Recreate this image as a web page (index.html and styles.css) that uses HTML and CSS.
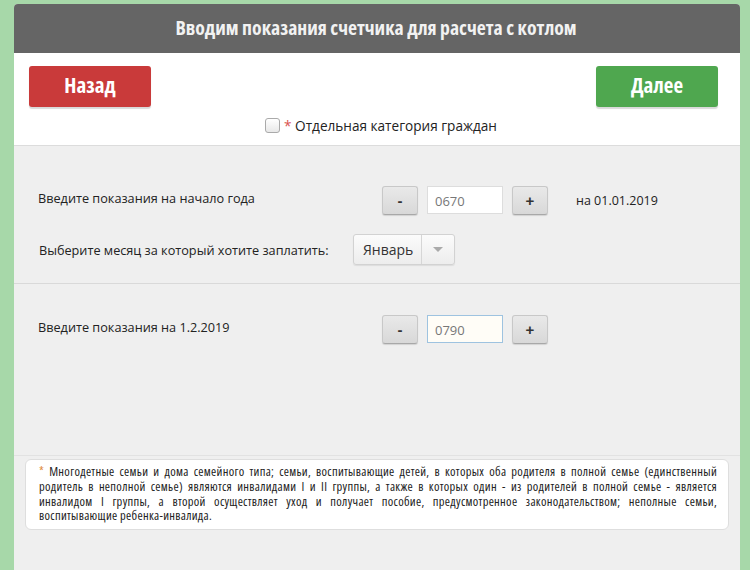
FILE: index.html
```html
<!DOCTYPE html>
<html lang="ru">
<head>
<meta charset="utf-8">
<link rel="stylesheet" href="styles.css">
</head>
<body>
<div class="panel">
  <div class="header">Вводим показания счетчика для расчета с котлом</div>
  <div class="top">
    <div class="nav">
      <button class="btn btn-back">Назад</button>
      <button class="btn btn-next">Далее</button>
    </div>
    <label class="category"><span class="check"></span><span class="cat-text"><span class="star">*</span> Отдельная категория граждан</span></label>
  </div>
  <div class="body">
    <div class="section">
      <div class="row">
        <div class="label label-a">Введите показания на начало года</div>
        <div class="stepper">
          <button class="step">-</button>
          <div class="value">0670</div>
          <button class="step">+</button>
        </div>
        <div class="date">на 01.01.2019</div>
      </div>
      <div class="row row-month">
        <div class="label label-b">Выберите месяц за который хотите заплатить:</div>
        <div class="select">
          <span class="select-text">Январь</span>
          <span class="select-arrow"><span class="tri"></span></span>
        </div>
      </div>
    </div>
    <div class="section section-2">
      <div class="row">
        <div class="label label-a">Введите показания на 1.2.2019</div>
        <div class="stepper">
          <button class="step">-</button>
          <div class="value value-focus">0790</div>
          <button class="step">+</button>
        </div>
      </div>
    </div>
    <div class="note-wrap">
      <p class="note"><span class="note-star">*</span> Многодетные семьи и дома семейного типа; семьи, воспитывающие детей, в которых оба родителя в полной семье (единственный родитель в неполной семье) являются инвалидами I и II группы, а также в которых один - из родителей в полной семье - является инвалидом I группы, а второй осуществляет уход и получает пособие, предусмотренное законодательством; неполные семьи, воспитывающие ребенка-инвалида.</p>
    </div>
  </div>
</div>
</body>
</html>
```
FILE: styles.css
```css
* { box-sizing: border-box; }
html, body { height: 100%; }
body {
  margin: 0;
  background: #a7d8a9;
  font-family: "Open Sans", "Liberation Sans", sans-serif;
  color: #222;
  overflow: hidden;
}
.panel {
  margin: 4px 10px 0 14px;
  height: 566px;
  background: #efefef;
  border-radius: 4px 4px 0 0;
  display: flex;
  flex-direction: column;
}
.header {
  height: 49px;
  background: #656565;
  color: #f2f2f2;
  border-radius: 4px 4px 0 0;
  font-family: "Open Sans", sans-serif;
  font-stretch: 75%;
  font-weight: bold;
  font-size: 19.7px;
  display: flex;
  align-items: center;
  justify-content: center;
  padding-bottom: 3px;
  padding-right: 2px;
}
.top {
  background: #fff;
  height: 93px;
  border-bottom: 1px solid #dcdcdc;
  padding: 13px 22px 0 15px;
  display: flex;
  flex-direction: column;
}
.nav {
  display: flex;
  justify-content: space-between;
}
.btn {
  width: 122px;
  height: 41px;
  border: none;
  border-radius: 3px;
  color: #fff;
  font-family: "Open Sans", sans-serif;
  font-stretch: 75%;
  font-weight: bold;
  font-size: 21px;
  box-shadow: 0 2px 1px rgba(0,0,0,0.15);
  padding: 0 0 3px;
}
.btn-back { background: #c93a3a; }
.btn-next { background: #4fa74f; }
.category {
  align-self: center;
  display: flex;
  align-items: center;
  margin-top: 9px;
  margin-left: 15px;
  font-size: 13.6px;
  color: #222;
}
.check {
  width: 15px;
  height: 15px;
  border: 1px solid #aaa;
  border-radius: 3px;
  background: linear-gradient(#fff, #e8e8e8);
  margin-right: 4px;
}
.star { color: #d9534f; }
.note-star { color: #e08a3c; }
.body {
  flex: 1;
  display: flex;
  flex-direction: column;
}
.section {
  padding: 40px 0 18px 24px;
  border-bottom: 1px solid #d9d9d9;
}
.section-2 {
  border-bottom: none;
  padding-top: 31px;
}
.row {
  display: flex;
  align-items: flex-start;
}
.row-month {
  margin-top: 19px;
  align-items: center;
}
.label {
  font-size: 12.7px;
  color: #222;
}
.label-a { width: 344px; padding-top: 3px; }
.label-b { width: 315px; padding-left: 1px; }
.stepper {
  display: flex;
  gap: 9px;
}
.step {
  width: 36px;
  height: 29px;
  border: 1px solid #c8c8c8;
  border-bottom-color: #a8a8a8;
  border-radius: 3px;
  background: linear-gradient(#e9e9e9, #d8d8d8);
  font-family: "Liberation Sans", sans-serif;
  font-weight: bold;
  font-size: 15px;
  color: #333;
  padding: 0;
  box-shadow: 0 1px 1px rgba(0,0,0,0.12);
}
.value {
  width: 76px;
  height: 28px;
  background: #fff;
  border: 1px solid #ddd;
  font-size: 13px;
  color: #777;
  padding: 5px 0 0 7px;
}
.value-focus {
  border-color: #9ec3e0;
  background: #fffdf7;
}
.date {
  font-size: 12.5px;
  margin-left: 28px;
  padding-top: 6px;
}
.select {
  width: 102px;
  height: 31px;
  border: 1px solid #d2d2d2;
  border-radius: 3px;
  background: linear-gradient(#fbfbfb, #ededed);
  display: flex;
  box-shadow: 0 1px 1px rgba(0,0,0,0.08);
}
.select-text {
  width: 68px;
  border-right: 1px solid #d6d6d6;
  font-size: 14px;
  color: #333;
  display: flex;
  align-items: center;
  padding-left: 9px;
}
.select-arrow {
  flex: 1;
  display: flex;
  align-items: center;
  justify-content: center;
}
.tri {
  width: 0;
  height: 0;
  border-left: 5px solid transparent;
  border-right: 5px solid transparent;
  border-top: 5px solid #aaa;
}
.note-wrap {
  margin-top: auto;
  margin-bottom: 40px;
  padding: 3px 11px 0 11px;
  border-top: 1px solid #e2e2e2;
}
.note {
  margin: 0;
  background: #fff;
  border: 1px solid #dedede;
  border-radius: 6px;
  padding: 5px 11px 5px 13px;
  font-size: 12.5px;
  line-height: 14.7px;
  letter-spacing: 0.3px;
  text-align: justify;
  color: #222;
  font-family: "Open Sans", sans-serif;
  font-stretch: 75%;
}
```
